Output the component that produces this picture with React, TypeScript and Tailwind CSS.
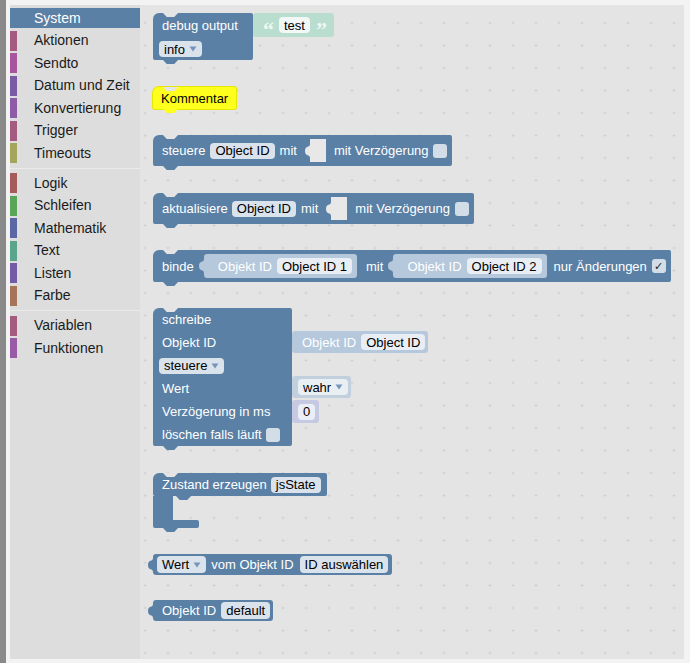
import type { ReactNode } from "react";

const categories = [
  { name: "System", swatch: "", selected: true },
  { name: "Aktionen", swatch: "bg-[#a55b80]" },
  { name: "Sendto", swatch: "bg-[#a8559e]" },
  { name: "Datum und Zeit", swatch: "bg-[#7a5ba6]" },
  { name: "Konvertierung", swatch: "bg-[#8d5ba8]" },
  { name: "Trigger", swatch: "bg-[#a55b80]" },
  { name: "Timeouts", swatch: "bg-[#a5a55b]" },
  { sep: true },
  { name: "Logik", swatch: "bg-[#a55b5b]" },
  { name: "Schleifen", swatch: "bg-[#5ba55b]" },
  { name: "Mathematik", swatch: "bg-[#5b67a5]" },
  { name: "Text", swatch: "bg-[#5ba58c]" },
  { name: "Listen", swatch: "bg-[#745ba5]" },
  { name: "Farbe", swatch: "bg-[#a5745b]" },
  { sep: true },
  { name: "Variablen", swatch: "bg-[#a55b80]" },
  { name: "Funktionen", swatch: "bg-[#995ba5]" },
];

const notchShape = "[clip-path:polygon(0_0,100%_0,75%_100%,25%_100%)]";

function Label({ children, className = "" }: { children: ReactNode; className?: string }) {
  return <span className={`whitespace-nowrap text-[13px] leading-none text-white ${className}`}>{children}</span>;
}

function Arrow() {
  return (
    <svg width="8" height="6" viewBox="0 0 8 6" className="ml-[4px]">
      <path d="M0.5 0.5 H7.5 L4 5.5 Z" fill="#7596ba" />
    </svg>
  );
}

function Field({
  children,
  arrow = false,
  bg = "bg-[#dae2eb]",
  className = "",
}: {
  children: ReactNode;
  arrow?: boolean;
  bg?: string;
  className?: string;
}) {
  return (
    <span
      className={`flex h-[16px] items-center whitespace-nowrap rounded-[4px] px-[5px] text-[13px] leading-none text-black ${bg} ${className}`}
    >
      {children}
      {arrow && <Arrow />}
    </span>
  );
}

function Check({ checked = false, className = "" }: { checked?: boolean; className?: string }) {
  return (
    <span
      className={`flex h-[14px] w-[14px] items-center justify-center rounded-[3px] bg-[#d3dde8] text-[11px] leading-none text-[#222] ${className}`}
    >
      {checked ? "✓" : ""}
    </span>
  );
}

// puzzle tab of an output connection, bulging to the left
function Tab({ fill, className = "" }: { fill: string; className?: string }) {
  return (
    <svg width="5" height="14" viewBox="0 0 5 14" className={`shrink-0 ${className}`}>
      <path d="M5 0 C5 4 0 1 0 7 C0 13 5 10 5 14 Z" fill={fill} />
    </svg>
  );
}

function Child({
  fill,
  body,
  className = "",
  children,
}: {
  fill: string;
  body: string;
  className?: string;
  children?: ReactNode;
}) {
  return (
    <div className={`flex items-center ${className}`}>
      <Tab fill={fill} />
      <div className={`flex items-center rounded-[3px] ${body}`}>{children}</div>
    </div>
  );
}

function Slot({ className = "" }: { className?: string }) {
  return (
    <div className={`flex items-center ${className}`}>
      <Tab fill="#e8e8e8" />
      <div className="h-[23px] w-[16px] bg-[#e8e8e8]" />
    </div>
  );
}

function Stmt({
  className = "",
  bg = "bg-[#5b80a5]",
  children,
}: {
  className?: string;
  bg?: string;
  children: ReactNode;
}) {
  return (
    <div className={`relative rounded-[2px] rounded-tl-[6px] ${bg} ${className}`}>
      <span className={`absolute left-[10px] top-0 h-[4px] w-[15px] bg-[#e4e4e4] ${notchShape}`} />
      {children}
      <span className={`absolute left-[10px] top-full h-[4px] w-[15px] ${bg} ${notchShape}`} />
    </div>
  );
}

function Toolbox() {
  return (
    <div className="flex w-[130px] shrink-0 flex-col bg-[#dddddd] pt-[2px]">
      {categories.map((c, i) =>
        c.sep ? (
          <div key={i} className="flex h-[7.5px] items-center">
            <div className="h-px w-full bg-[#eaeaea]" />
          </div>
        ) : c.selected ? (
          <div key={i} className="flex h-[22.5px] items-center">
            <div className="flex h-[20px] flex-1 items-center bg-[#5b80a5] pl-[24px] text-[14px] text-white">
              {c.name}
            </div>
          </div>
        ) : (
          <div key={i} className="flex h-[22.5px] items-center">
            <span className={`h-[20px] w-[7px] ${c.swatch}`} />
            <span className="ml-[17px] text-[14px] text-[#1a1a1a]">{c.name}</span>
          </div>
        )
      )}
    </div>
  );
}

function Workspace() {
  return (
    <div className="flex flex-1 flex-col items-start bg-[#e4e4e4] pl-[13px] pt-[8px] [background-image:radial-gradient(circle,#d1d1d1_1px,transparent_1.3px)] [background-position:-6.5px_6.75px] [background-size:23px_22.5px]">
      {/* debug output */}
      <div className="flex items-start">
        <Stmt className="h-[47px] w-[100px]">
          <div className="flex h-[24px] items-center pl-[9px]">
            <Label>debug output</Label>
          </div>
          <div className="mt-[4px] flex pl-[6px]">
            <Field arrow>info</Field>
          </div>
        </Stmt>
        <Child fill="#b9ddcf" body="h-[24px] bg-[#b9ddcf] pl-[10px] pr-[7px]" className="ml-[-5px]">
          <span className="mt-[1px] h-[14px] text-[22px] font-bold leading-none text-[#eef8f3] [font-family:'Liberation_Serif',serif]">
            “
          </span>
          <Field bg="bg-[#f1f8f5]" className="ml-[5px]">
            test
          </Field>
          <span className="ml-[6px] mt-[1px] h-[14px] text-[22px] font-bold leading-none text-[#eef8f3] [font-family:'Liberation_Serif',serif]">
            ”
          </span>
        </Child>
      </div>

      {/* Kommentar */}
      <Stmt bg="bg-[#ffff1e]" className="mt-[27px] flex h-[22px] items-center pl-[8px] pr-[8px] shadow-[0_0_0_1px_#e6e600]">
        <span className="text-[13px] leading-none text-black">Kommentar</span>
      </Stmt>

      {/* steuere */}
      <Stmt className="mt-[26px] flex h-[31px] items-center pl-[9px] pr-[5px]">
        <Label>steuere</Label>
        <Field className="ml-[5px]">Object ID</Field>
        <Label className="ml-[5px]">mit</Label>
        <Slot className="ml-[8px]" />
        <Label className="ml-[8px]">mit Verzögerung</Label>
        <Check className="ml-[4px]" />
      </Stmt>

      {/* aktualisiere */}
      <Stmt className="mt-[27px] flex h-[31px] items-center pl-[9px] pr-[5px]">
        <Label>aktualisiere</Label>
        <Field className="ml-[4px]">Object ID</Field>
        <Label className="ml-[5px]">mit</Label>
        <Slot className="ml-[8px]" />
        <Label className="ml-[8px]">mit Verzögerung</Label>
        <Check className="ml-[5px]" />
      </Stmt>

      {/* binde */}
      <Stmt className="mt-[26px] flex h-[32px] items-center pl-[9px] pr-[5px]">
        <Label>binde</Label>
        <Child fill="#b6c8db" body="h-[24px] bg-[#b6c8db] pl-[14px] pr-[5px]" className="ml-[5px]">
          <Label className="text-[#f4f7fa]">Objekt ID</Label>
          <Field bg="bg-[#e9eef4]" className="ml-[5px]">
            Object ID 1
          </Field>
        </Child>
        <Label className="ml-[9px]">mit</Label>
        <Child fill="#b6c8db" body="h-[24px] bg-[#b6c8db] pl-[14px] pr-[5px]" className="ml-[5px]">
          <Label className="text-[#f4f7fa]">Objekt ID</Label>
          <Field bg="bg-[#e9eef4]" className="ml-[5px]">
            Object ID 2
          </Field>
        </Child>
        <Label className="ml-[7px]">nur Änderungen</Label>
        <Check checked className="ml-[5px]" />
      </Stmt>

      {/* schreibe */}
      <div className="mt-[26px] flex items-start">
        <Stmt className="w-[139px]">
          <div className="flex h-[23px] items-center pl-[9px]">
            <Label>schreibe</Label>
          </div>
          <div className="flex h-[23px] items-center pl-[9px]">
            <Label>Objekt ID</Label>
          </div>
          <div className="flex h-[23px] items-center pl-[6px]">
            <Field arrow>steuere</Field>
          </div>
          <div className="flex h-[23px] items-center pl-[9px]">
            <Label>Wert</Label>
          </div>
          <div className="flex h-[23px] items-center pl-[9px]">
            <Label>Verzögerung in ms</Label>
          </div>
          <div className="flex h-[23px] items-center pl-[9px]">
            <Label>löschen falls läuft</Label>
            <Check className="ml-[4px]" />
          </div>
        </Stmt>
        <div className="flex flex-col items-start">
          <Child fill="#b6c8db" body="h-[22px] bg-[#b6c8db] pl-[10px] pr-[3px]" className="ml-[-5px] mt-[23px]">
            <Label className="text-[#f4f7fa]">Objekt ID</Label>
            <Field bg="bg-[#e9eef4]" className="ml-[5px]">
              Object ID
            </Field>
          </Child>
          <Child fill="#c2d0de" body="h-[22px] bg-[#c2d0de] pl-[6px] pr-[3px]" className="ml-[-5px] mt-[23px]">
            <Field arrow bg="bg-[#eaeff4]">
              wahr
            </Field>
          </Child>
          <Child fill="#c5c9e2" body="h-[23px] bg-[#c5c9e2] pl-[6px] pr-[4px]" className="ml-[-5px] mt-[2px]">
            <Field bg="bg-[#eceef7]">0</Field>
          </Child>
        </div>
      </div>

      {/* Zustand erzeugen */}
      <div className="relative mt-[27px] flex flex-col items-start">
        <span className={`absolute left-[10px] top-0 h-[4px] w-[15px] bg-[#e4e4e4] ${notchShape}`} />
        <div className="flex h-[23px] w-[174px] items-center rounded-[2px] rounded-tl-[6px] bg-[#5b80a5] pl-[9px]">
          <Label>Zustand erzeugen</Label>
          <Field className="ml-[4px]">jsState</Field>
        </div>
        <span className={`absolute left-[23px] top-[23px] h-[4px] w-[15px] bg-[#5b80a5] ${notchShape}`} />
        <div className="h-[24px] w-[20px] bg-[#5b80a5]" />
        <div className="h-[8px] w-[46px] rounded-[2px] rounded-tl-none bg-[#5b80a5]" />
        <span className={`absolute left-[10px] top-full h-[4px] w-[15px] bg-[#5b80a5] ${notchShape}`} />
      </div>

      {/* Wert vom Objekt ID */}
      <div className="ml-[-5px] mt-[26px] flex items-start">
        <Tab fill="#5b80a5" className="mt-[4px]" />
        <div className="flex h-[21px] items-center rounded-[3px] bg-[#5b80a5] pl-[4px] pr-[4px]">
          <Field arrow className="h-[17px]">
            Wert
          </Field>
          <Label className="ml-[5px]">vom Objekt ID</Label>
          <Field className="ml-[6px] h-[17px]">ID auswählen</Field>
        </div>
      </div>

      {/* Objekt ID default */}
      <div className="ml-[-5px] mt-[25px] flex items-start">
        <Tab fill="#5b80a5" className="mt-[4px]" />
        <div className="flex h-[21px] items-center rounded-[3px] bg-[#5b80a5] pl-[9px] pr-[3px]">
          <Label>Objekt ID</Label>
          <Field className="ml-[5px] h-[17px]">default</Field>
        </div>
      </div>
    </div>
  );
}

export default function App() {
  return (
    <div className="flex h-[663px] w-[690px] bg-[#f3f3f3] [font-family:'Liberation_Sans',Arial,sans-serif]">
      <div className="w-[6px] shrink-0 bg-[#8a8a8a]" />
      <div className="flex flex-1 flex-col pb-[4px] pl-[4px] pr-[6px] pt-[5px]">
        <div className="flex flex-1 overflow-hidden">
          <Toolbox />
          <Workspace />
        </div>
      </div>
    </div>
  );
}
